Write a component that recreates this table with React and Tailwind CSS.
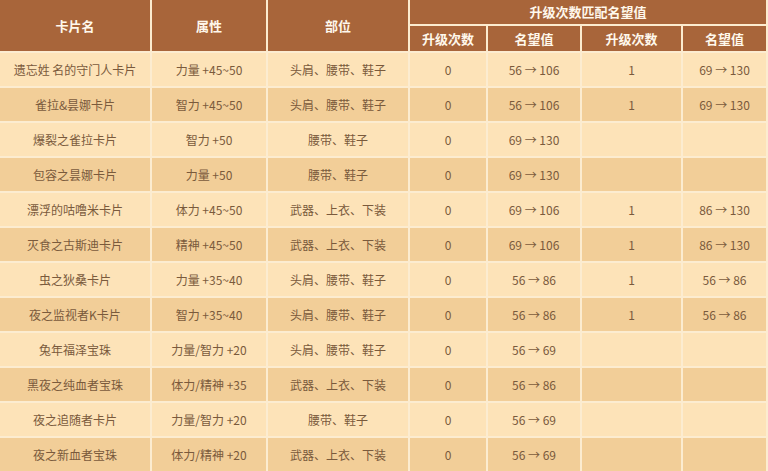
import React from "react";

const rows = [
  ["遗忘姓 名的守门人卡片", "力量 +45~50", "头肩、腰带、鞋子", "0", "56 → 106", "1", "69 → 130"],
  ["雀拉&昙娜卡片", "智力 +45~50", "头肩、腰带、鞋子", "0", "56 → 106", "1", "69 → 130"],
  ["爆裂之雀拉卡片", "智力 +50", "腰带、鞋子", "0", "69 → 130", "", ""],
  ["包容之昙娜卡片", "力量 +50", "腰带、鞋子", "0", "69 → 130", "", ""],
  ["漂浮的咕噜米卡片", "体力 +45~50", "武器、上衣、下装", "0", "69 → 106", "1", "86 → 130"],
  ["灭食之古斯迪卡片", "精神 +45~50", "武器、上衣、下装", "0", "69 → 106", "1", "86 → 130"],
  ["虫之狄桑卡片", "力量 +35~40", "头肩、腰带、鞋子", "0", "56 → 86", "1", "56 → 86"],
  ["夜之监视者K卡片", "智力 +35~40", "头肩、腰带、鞋子", "0", "56 → 86", "1", "56 → 86"],
  ["兔年福泽宝珠", "力量/智力 +20", "头肩、腰带、鞋子", "0", "56 → 69", "", ""],
  ["黑夜之纯血者宝珠", "体力/精神 +35", "武器、上衣、下装", "0", "56 → 86", "", ""],
  ["夜之追随者卡片", "力量/智力 +20", "腰带、鞋子", "0", "56 → 69", "", ""],
  ["夜之新血者宝珠", "体力/精神 +20", "武器、上衣、下装", "0", "56 → 69", "", ""],
];

const th = "border-2 border-[#fcecd0] p-0 text-center font-bold text-[13px] text-[#fff8ec]";
const td = "border-2 border-[#fcecd0] p-0 text-center text-[12px] text-[#7a5a3c]";

export default function App() {
  return (
    <div
      className="w-[768px] h-[471px] overflow-hidden bg-[#fcecd0]"
      style={{ fontFamily: '"Noto Sans CJK SC", "Noto Sans", sans-serif' }}
    >
      <table className="w-[766px] table-fixed border-collapse border-hidden">
        <colgroup>
          <col className="w-[151px]" />
          <col className="w-[116px]" />
          <col className="w-[142px]" />
          <col className="w-[78px]" />
          <col className="w-[94px]" />
          <col className="w-[101px]" />
          <col className="w-[84px]" />
        </colgroup>
        <thead className="bg-[#a8653a]">
          <tr className="h-[25px]">
            <th rowSpan={2} className={th}>卡片名</th>
            <th rowSpan={2} className={th}>属性</th>
            <th rowSpan={2} className={th}>部位</th>
            <th colSpan={4} className={th}>升级次数匹配名望值</th>
          </tr>
          <tr className="h-[27px]">
            <th className={th}>升级次数</th>
            <th className={th}>名望值</th>
            <th className={th}>升级次数</th>
            <th className={th}>名望值</th>
          </tr>
        </thead>
        <tbody>
          {rows.map((r, i) => (
            <tr
              key={i}
              className={
                "h-[35px] " + (i % 2 === 0 ? "bg-[#fde3b8]" : "bg-[#f2ce98]")
              }
            >
              {r.map((c, j) => (
                <td key={j} className={td}>
                  {c}
                </td>
              ))}
            </tr>
          ))}
        </tbody>
      </table>
    </div>
  );
}
